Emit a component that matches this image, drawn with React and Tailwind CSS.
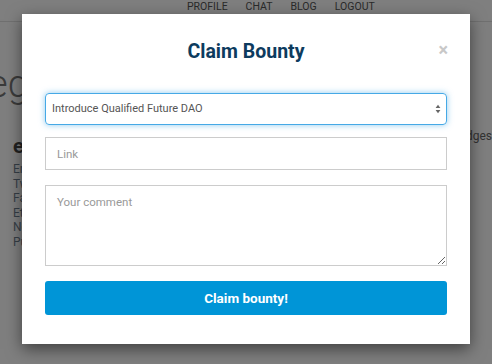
import React from "react";

export default function App() {
  return (
    <div className="relative h-[364px] w-[492px] overflow-hidden bg-white font-['Roboto',sans-serif]">
      {/* background page */}
      <nav className="flex h-[22px] items-start gap-[18px] border-b border-[#e0e0e0] pl-[187px] pt-[1px] text-[10.5px] uppercase leading-[12px] text-[#555]">
        <span>Profile</span>
        <span>Chat</span>
        <span>Blog</span>
        <span>Logout</span>
      </nav>
      <div className="flex">
        <div className="w-[455px] pl-[13px]">
          <div className="ml-[-45px] mt-[41px] whitespace-nowrap text-[38px] font-light leading-[42px] text-[#777]">Legends</div>
          <div className="mt-[29px] text-[20px] font-bold leading-[24px] text-[#444]">earn</div>
          <ul className="mt-[4px] text-[12px] leading-[14.5px] text-[#6f7f8f]">
            <li>Ember</li>
            <li>Twitter</li>
            <li>Facebook</li>
            <li>Ethereum</li>
            <li>News</li>
            <li>Public</li>
          </ul>
        </div>
        <div className="pt-[107px] text-[12px] leading-[14px] text-[#666]">Badges</div>
      </div>

      {/* backdrop */}
      <div className="absolute inset-0 bg-black/50" />

      {/* modal */}
      <div className="absolute left-[22px] top-[14px] w-[448px] bg-white px-[23px] pb-[29px] pt-[24px] shadow-[0_5px_15px_rgba(0,0,0,0.5)]">
        <div className="relative">
          <h2 className="text-center text-[19.5px] font-bold leading-[28px] text-[#0d3b5e]">Claim Bounty</h2>
          <span className="absolute right-[-1px] top-[2px] text-[18px] font-bold leading-[20px] text-[#c8c8c8]">×</span>
        </div>
        <div className="mt-[27px] flex h-[32px] items-center justify-between rounded-[4px] border border-[#46a9e6] pl-[6px] pr-[4px] text-[11px] text-[#555] shadow-[0_0_6px_rgba(70,169,230,0.6)]">
          <span>Introduce Qualified Future DAO</span>
          <svg width="6" height="10" viewBox="0 0 6 10" className="mr-[1px]">
            <path d="M3 0.8 L5.4 4 H0.6 Z" fill="#666" />
            <path d="M3 9.2 L5.4 6 H0.6 Z" fill="#666" />
          </svg>
        </div>
        <input
          type="text"
          placeholder="Link"
          className="mt-[12px] block h-[33px] w-full border border-[#ccc] px-[11px] text-[11.5px] outline-none placeholder:text-[#999]"
        />
        <textarea
          placeholder="Your comment"
          className="mt-[15px] block h-[81px] w-full border border-[#ccc] px-[11px] pt-[8px] text-[11.5px] outline-none placeholder:text-[#999]"
        />
        <button className="mt-[15px] block h-[34px] w-full rounded-[3px] bg-[#0095d7] text-[13.5px] font-bold text-white">
          Claim bounty!
        </button>
      </div>
    </div>
  );
}
